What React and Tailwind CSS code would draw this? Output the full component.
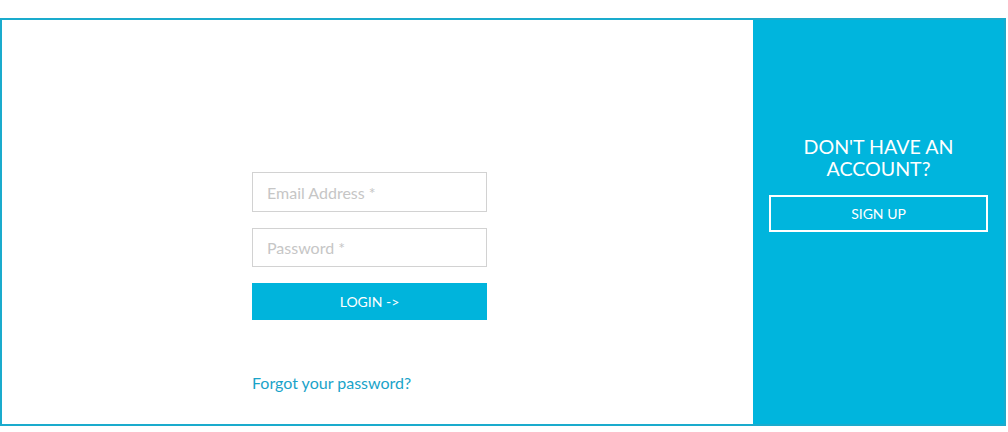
import React from 'react';

const App = () => {
  return (
    <div className="w-[1008px] h-[432px] bg-white pt-[18px]" style={{ fontFamily: 'Lato, "Open Sans", sans-serif' }}>
      <div className="flex w-[1006px] h-[408px] border-2 border-[#1aabcd]">
        {/* Login form */}
        <div className="w-[751px] pl-[250px] pt-[152px]">
          <div className="flex flex-col w-[235px]">
            <input
              type="text"
              placeholder="Email Address *"
              className="h-[40px] px-[14px] border border-[#d2d2d2] text-[16px] text-gray-700 placeholder:text-[#c6c6c6] outline-none"
            />
            <input
              type="password"
              placeholder="Password *"
              className="mt-[16px] h-[39px] px-[14px] border border-[#d2d2d2] text-[16px] text-gray-700 placeholder:text-[#c6c6c6] outline-none"
            />
            <button className="mt-[16px] h-[37px] bg-[#00b4dc] text-white text-[14px]">
              LOGIN -&gt;
            </button>
          </div>
          <a href="#" className="block mt-[51px] text-[16px] leading-[24px] text-[#1aa3c9]">
            Forgot your password?
          </a>
        </div>

        {/* Sign up panel */}
        <div className="flex-1 bg-[#00b5dd] px-4 pt-[116px] text-white text-center">
          <h2 className="text-[19.6px] leading-[22px] uppercase">
            Don't have an<br />account?
          </h2>
          <button className="mt-[15px] w-full h-[37px] border-2 border-white text-[14px]">
            SIGN UP
          </button>
        </div>
      </div>
    </div>
  );
};

export default App;
